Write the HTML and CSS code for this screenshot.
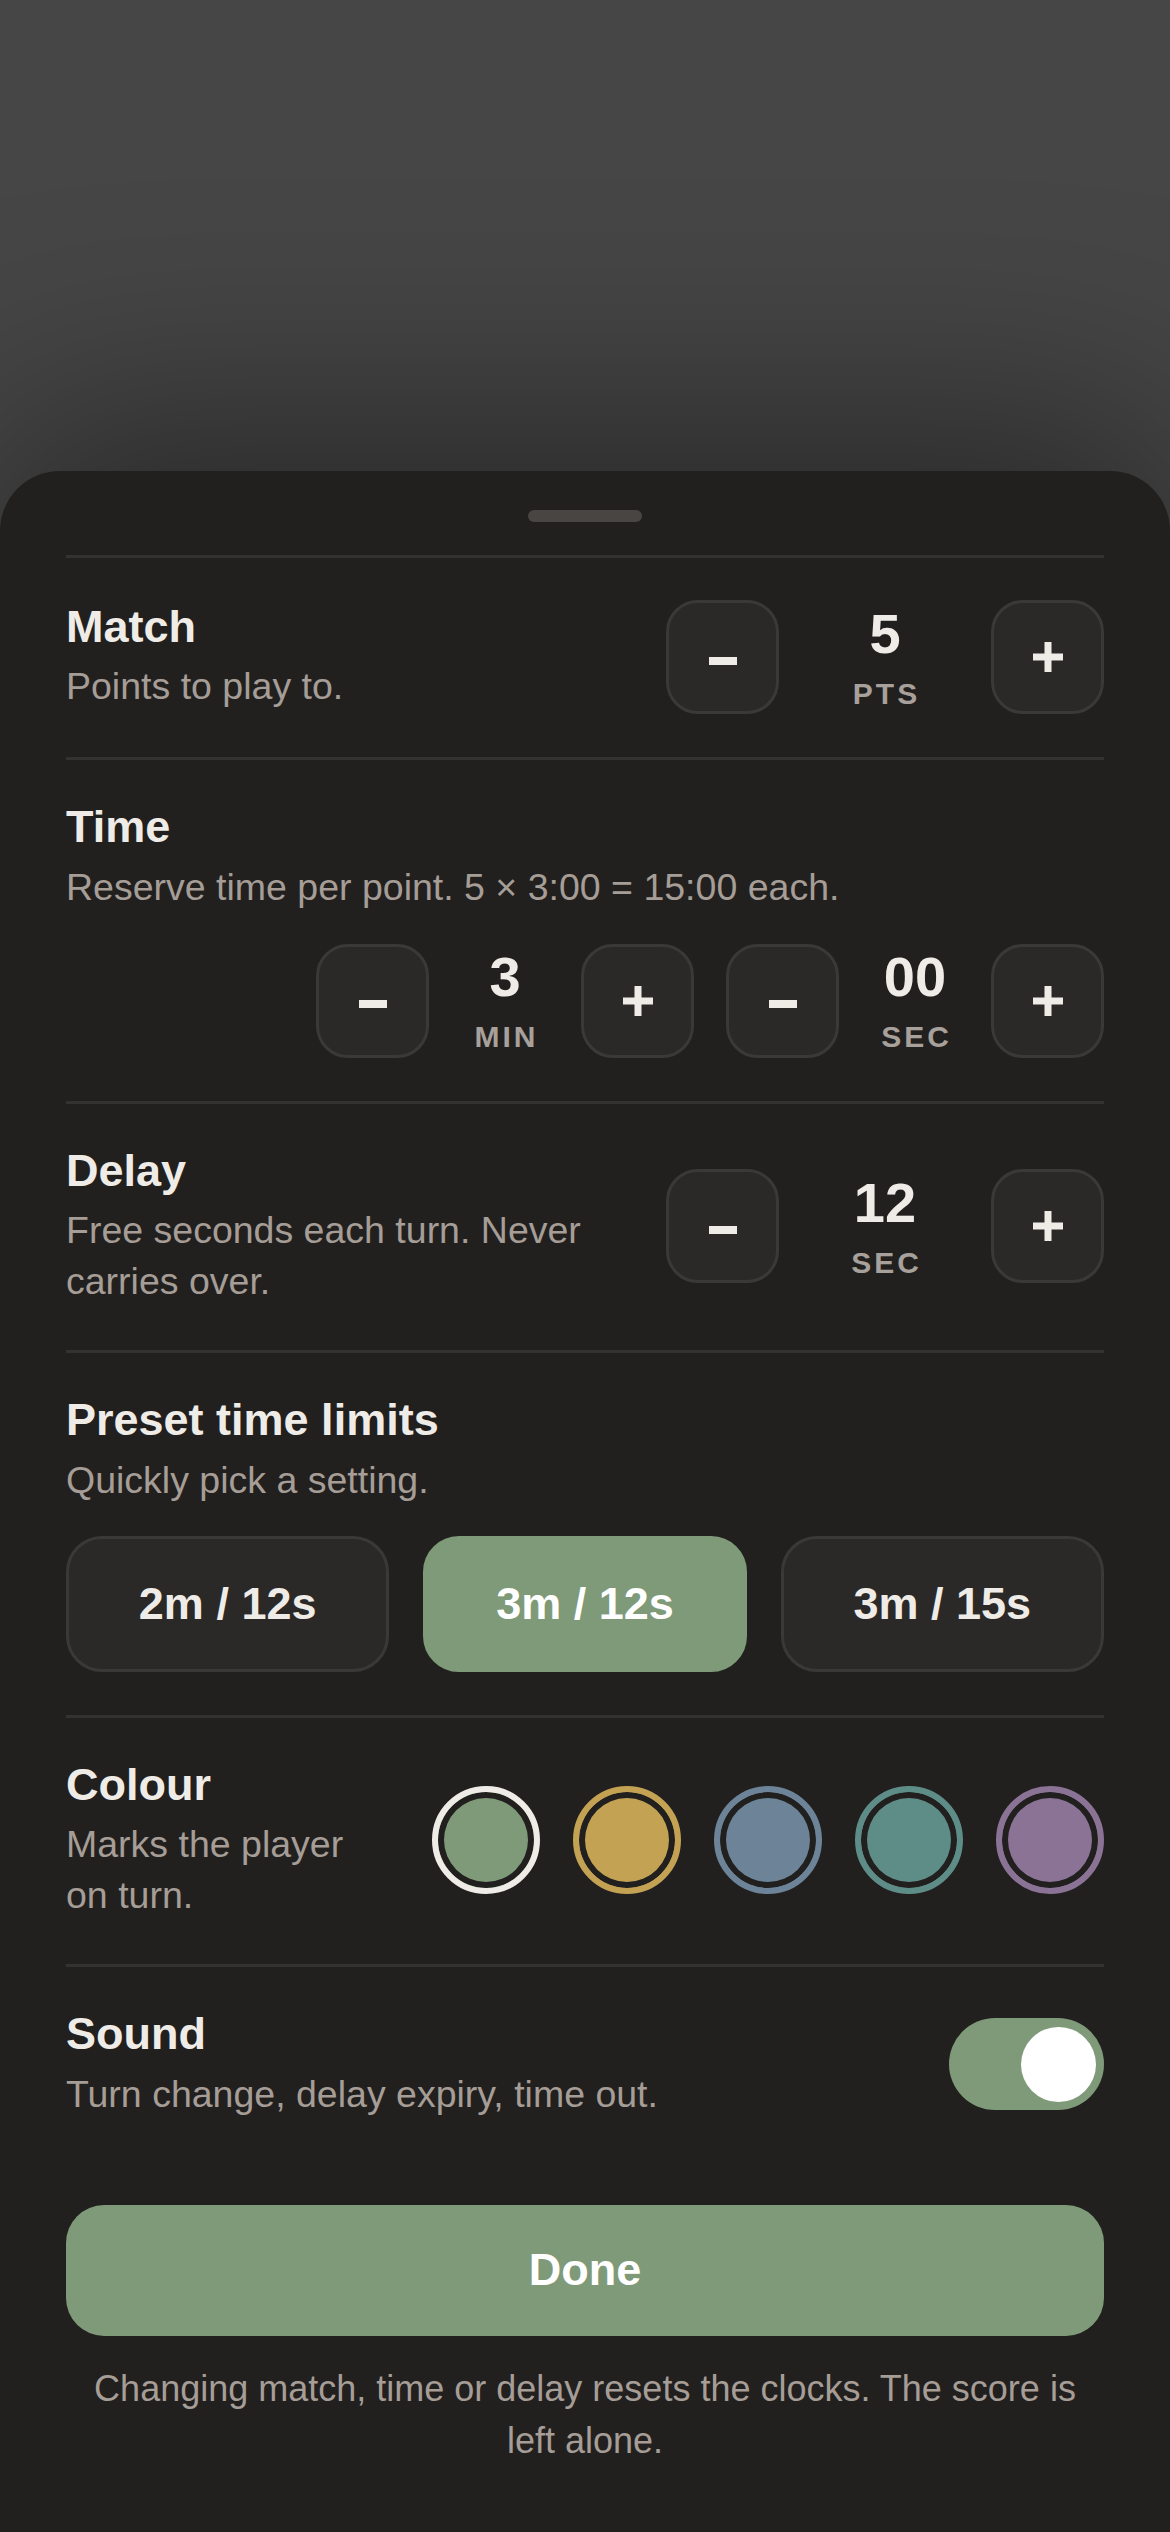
FILE: index.html
```html
<!DOCTYPE html>
<html lang="en">
<head>
<meta charset="utf-8">
<title>Settings</title>
<link rel="stylesheet" href="styles.css">
</head>
<body>
<div class="scrim"></div>
<div class="sheet">
  <div class="handle"></div>

  <section class="setting inline">
    <div class="info">
      <h2 class="title">Match</h2>
      <p class="desc">Points to play to.</p>
    </div>
    <div class="stepper">
      <button class="step minus" aria-label="Decrease"><svg viewBox="0 0 30 30" width="30" height="30"><rect x="1" y="15" width="28" height="8" fill="currentColor"/></svg></button>
      <div class="value"><span class="num">5</span><span class="unit">PTS</span></div>
      <button class="step plus" aria-label="Increase"><svg viewBox="0 0 30 30" width="30" height="30"><rect x="11.5" y="0" width="7" height="30" fill="currentColor"/><rect x="0" y="11.5" width="30" height="7" fill="currentColor"/></svg></button>
    </div>
  </section>

  <section class="setting">
    <div class="info">
      <h2 class="title">Time</h2>
      <p class="desc">Reserve time per point. 5 × 3:00 = 15:00 each.</p>
    </div>
    <div class="time-row">
      <div class="stepper compact">
        <button class="step minus" aria-label="Fewer minutes"><svg viewBox="0 0 30 30" width="30" height="30"><rect x="1" y="14" width="28" height="8" fill="currentColor"/></svg></button>
        <div class="value"><span class="num">3</span><span class="unit">MIN</span></div>
        <button class="step plus" aria-label="More minutes"><svg viewBox="0 0 30 30" width="30" height="30"><rect x="11.5" y="0" width="7" height="30" fill="currentColor"/><rect x="0" y="11.5" width="30" height="7" fill="currentColor"/></svg></button>
      </div>
      <div class="stepper compact">
        <button class="step minus" aria-label="Fewer seconds"><svg viewBox="0 0 30 30" width="30" height="30"><rect x="1" y="14" width="28" height="8" fill="currentColor"/></svg></button>
        <div class="value"><span class="num">00</span><span class="unit">SEC</span></div>
        <button class="step plus" aria-label="More seconds"><svg viewBox="0 0 30 30" width="30" height="30"><rect x="11.5" y="0" width="7" height="30" fill="currentColor"/><rect x="0" y="11.5" width="30" height="7" fill="currentColor"/></svg></button>
      </div>
    </div>
  </section>

  <section class="setting inline">
    <div class="info">
      <h2 class="title">Delay</h2>
      <p class="desc">Free seconds each turn. Never carries over.</p>
    </div>
    <div class="stepper">
      <button class="step minus" aria-label="Decrease"><svg viewBox="0 0 30 30" width="30" height="30"><rect x="1" y="15" width="28" height="8" fill="currentColor"/></svg></button>
      <div class="value"><span class="num">12</span><span class="unit">SEC</span></div>
      <button class="step plus" aria-label="Increase"><svg viewBox="0 0 30 30" width="30" height="30"><rect x="11.5" y="0" width="7" height="30" fill="currentColor"/><rect x="0" y="11.5" width="30" height="7" fill="currentColor"/></svg></button>
    </div>
  </section>

  <section class="setting">
    <div class="info">
      <h2 class="title">Preset time limits</h2>
      <p class="desc">Quickly pick a setting.</p>
    </div>
    <div class="presets">
      <button class="preset">2m / 12s</button>
      <button class="preset active">3m / 12s</button>
      <button class="preset">3m / 15s</button>
    </div>
  </section>

  <section class="setting inline">
    <div class="info">
      <h2 class="title">Colour</h2>
      <p class="desc">Marks the player on turn.</p>
    </div>
    <div class="swatches">
      <span class="swatch selected sw-green"></span>
      <span class="swatch sw-gold"></span>
      <span class="swatch sw-blue"></span>
      <span class="swatch sw-teal"></span>
      <span class="swatch sw-purple"></span>
    </div>
  </section>

  <section class="setting inline">
    <div class="info">
      <h2 class="title">Sound</h2>
      <p class="desc">Turn change, delay expiry, time out.</p>
    </div>
    <div class="toggle on"><span class="knob"></span></div>
  </section>

  <button class="done">Done</button>
  <p class="footnote">Changing match, time or delay resets the clocks. The score is left alone.</p>
</div>
</body>
</html>
```

FILE: styles.css
```css
* { box-sizing: border-box; }

html, body {
  margin: 0;
  padding: 0;
}

body {
  width: 1170px;
  min-height: 2532px;
  background: #464646;
  font-family: "Liberation Sans", Arial, sans-serif;
  display: flex;
  flex-direction: column;
  overflow: hidden;
}

.scrim {
  height: 471px;
  flex: none;
}

.sheet {
  flex: 1;
  background: #21201f;
  border-radius: 60px 60px 0 0;
  padding: 39px 66px 66px;
  box-shadow: 0 -40px 220px 10px rgba(0, 0, 0, 0.42);
}

.handle {
  width: 114px;
  height: 12px;
  border-radius: 6px;
  background: #494543;
  margin: 0 auto 33px;
}

.setting {
  border-top: 3px solid #333230;
  padding: 42px 0 43px;
}

.setting.inline {
  display: flex;
  align-items: center;
  gap: 48px;
}

.info {
  flex: 1;
  min-width: 0;
}

.title {
  margin: 0;
  font-size: 45px;
  line-height: 49.5px;
  font-weight: 700;
  color: #efece7;
}

.desc {
  margin: 10px 0 0;
  font-size: 37.5px;
  line-height: 51px;
  color: #a59d96;
}

.stepper {
  display: flex;
  align-items: center;
  flex: none;
}

.step {
  width: 113px;
  height: 114px;
  border: 3px solid #3a3937;
  border-radius: 32px;
  background: #2a2928;
  color: #efece7;
  padding: 0;
  display: flex;
  align-items: center;
  justify-content: center;
  font: inherit;
}

.step svg {
  display: block;
}

.value {
  width: 212px;
  display: flex;
  flex-direction: column;
  align-items: center;
}

.stepper.compact .value {
  width: 152px;
}

.num {
  font-size: 56px;
  line-height: 56px;
  font-weight: 700;
  color: #efece7;
}

.unit {
  margin-top: 17px;
  font-size: 30px;
  line-height: 30px;
  font-weight: 700;
  letter-spacing: 3px;
  padding-left: 3px;
  color: #a8a09a;
}

.time-row {
  display: flex;
  justify-content: flex-end;
  gap: 32px;
  margin-top: 31px;
}

.presets {
  display: grid;
  grid-template-columns: repeat(3, 1fr);
  gap: 34px;
  margin-top: 30px;
}

.preset {
  height: 136px;
  border: 3px solid #3a3937;
  border-radius: 36px;
  background: #2a2928;
  color: #efece7;
  font: inherit;
  font-size: 45px;
  font-weight: 700;
  padding: 0;
}

.preset.active {
  background: #7f9a78;
  border-color: #7f9a78;
  color: #ffffff;
}

.swatches {
  display: flex;
  gap: 33px;
  flex: none;
}

.swatch {
  width: 108px;
  height: 108px;
  border-radius: 50%;
  border: 6px solid;
  box-shadow: inset 0 0 0 6px #21201f;
}

.sw-green { background: #7f9a78; border-color: #7f9a78; }
.sw-gold { background: #c3a253; border-color: #c3a253; }
.sw-blue { background: #6c8398; border-color: #6c8398; }
.sw-teal { background: #5e8d88; border-color: #5e8d88; }
.sw-purple { background: #8b7396; border-color: #8b7396; }

.swatch.selected {
  border-color: #efece7;
}

.toggle {
  width: 155px;
  height: 92px;
  border-radius: 46px;
  background: #7f9a78;
  flex: none;
  display: flex;
  align-items: center;
  justify-content: flex-end;
  padding: 0 8px;
}

.knob {
  width: 75px;
  height: 75px;
  border-radius: 50%;
  background: #ffffff;
}

.done {
  display: block;
  width: 100%;
  height: 131px;
  margin-top: 42px;
  border: none;
  border-radius: 38px;
  background: #7f9a78;
  color: #ffffff;
  font: inherit;
  font-size: 45px;
  font-weight: 700;
}

.footnote {
  margin: 27px 0 0;
  padding: 0 16px;
  text-align: center;
  font-size: 36px;
  line-height: 52px;
  color: #a59d96;
}
```
